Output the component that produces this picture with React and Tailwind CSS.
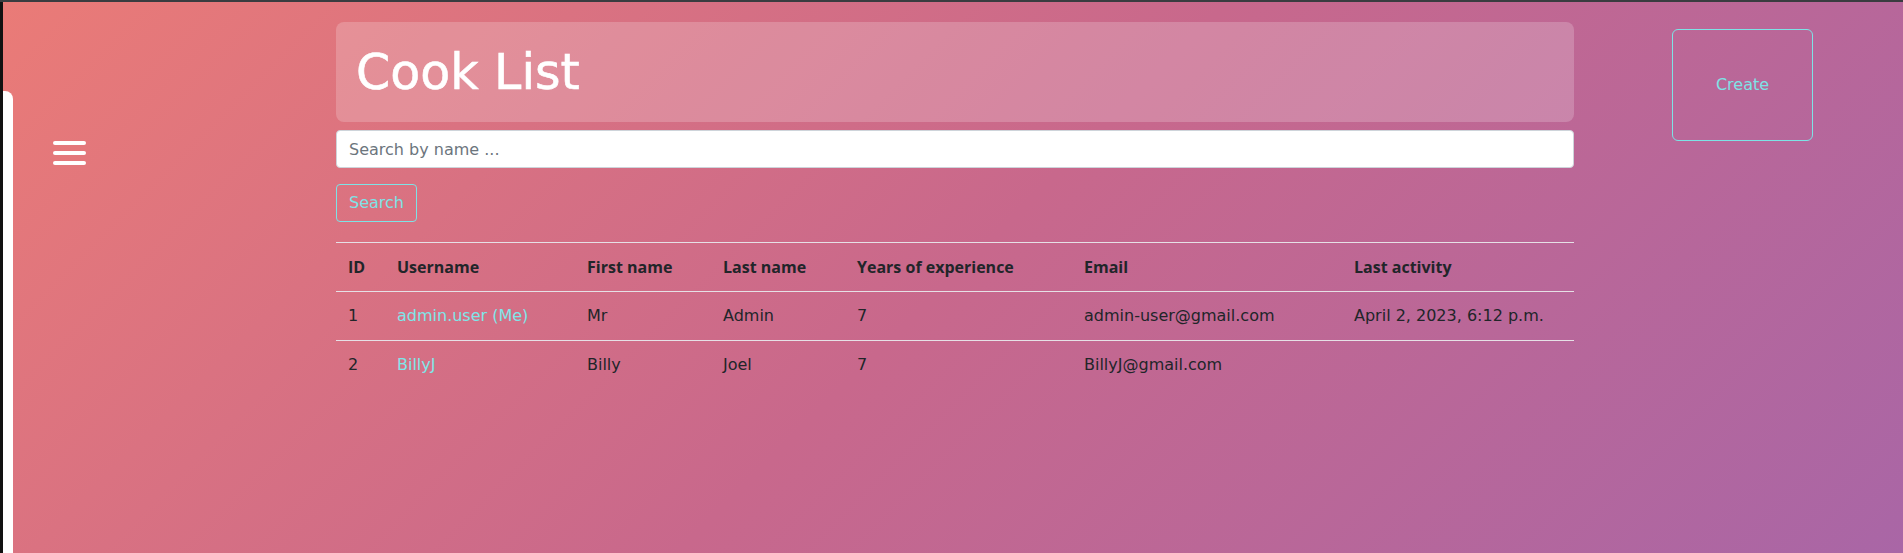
const body = { fontFamily: '"DejaVu Sans", "Liberation Sans", sans-serif' };
const bold = { fontFamily: '"Open Sans", "DejaVu Sans", sans-serif' };

const cooks = [
  {
    id: 1,
    username: "admin.user (Me)",
    first: "Mr",
    last: "Admin",
    years: 7,
    email: "admin-user@gmail.com",
    activity: "April 2, 2023, 6:12 p.m.",
  },
  {
    id: 2,
    username: "BillyJ",
    first: "Billy",
    last: "Joel",
    years: 7,
    email: "BillyJ@gmail.com",
    activity: "",
  },
];

function Hamburger() {
  return (
    <svg width="33" height="24" viewBox="0 0 33 24" fill="#fff">
      <rect x="0" y="0" width="33" height="4" rx="2" />
      <rect x="0" y="10" width="33" height="4" rx="2" />
      <rect x="0" y="20" width="33" height="4" rx="2" />
    </svg>
  );
}

export default function App() {
  return (
    <div className="flex min-h-screen flex-col bg-[#3a3c40] pt-[2px]" style={body}>
      <div className="flex flex-1 bg-[#111]">
        <div className="w-[3px]" />
        <div className="flex flex-1 bg-[linear-gradient(135deg,#ea7b77_0%,#c8688c_50%,#a966a6_100%)]">
          {/* left: sidebar peek + menu toggle */}
          <div className="flex w-[333px] shrink-0">
            <div className="mt-[89px] w-[10px] rounded-tr-lg bg-white" />
            <div className="ml-[40px] mt-[139px]">
              <Hamburger />
            </div>
          </div>

          {/* main */}
          <div className="w-[1238px] shrink-0 pt-[20px]">
            <div className="flex h-[100px] items-center rounded-lg bg-white/20 px-[20px]">
              <h1 className="text-[49px] leading-none text-white [-webkit-text-stroke:0.6px_white]">
                Cook List
              </h1>
            </div>

            <input
              type="text"
              placeholder="Search by name ..."
              className="mt-2 block h-[38px] w-full rounded border border-[#ced4da] bg-white px-3 text-base text-[#495057] placeholder:text-[#6c757d] outline-none"
            />

            <button className="mt-4 h-[38px] rounded border border-[#7de3e6] px-3 text-base text-[#7de3e6]">
              Search
            </button>

            <table className="mt-5 w-full table-fixed border-collapse text-left text-base text-[#212529]">
              <thead>
                <tr className="border-t border-[#e6e0e6]" style={bold}>
                  <th className="w-[49px] p-3 font-bold">ID</th>
                  <th className="w-[190px] p-3 font-bold">Username</th>
                  <th className="w-[136px] p-3 font-bold">First name</th>
                  <th className="w-[134px] p-3 font-bold">Last name</th>
                  <th className="w-[227px] p-3 font-bold">Years of experience</th>
                  <th className="w-[270px] p-3 font-bold">Email</th>
                  <th className="w-[232px] p-3 font-bold">Last activity</th>
                </tr>
              </thead>
              <tbody>
                {cooks.map((c) => (
                  <tr key={c.id} className="border-t border-[#e6e0e6]">
                    <td className="p-3">{c.id}</td>
                    <td className="p-3">
                      <a href="#" className="text-[#7ee6e9]">
                        {c.username}
                      </a>
                    </td>
                    <td className="p-3">{c.first}</td>
                    <td className="p-3">{c.last}</td>
                    <td className="p-3">{c.years}</td>
                    <td className="p-3">{c.email}</td>
                    <td className="p-3">{c.activity}</td>
                  </tr>
                ))}
              </tbody>
            </table>
          </div>

          {/* right: create */}
          <div className="pl-[98px] pt-[27px]">
            <button className="flex h-[112px] w-[141px] items-center justify-center rounded-md border border-[#7de3e6] text-base text-[#7de3e6]">
              Create
            </button>
          </div>
        </div>
      </div>
    </div>
  );
}
